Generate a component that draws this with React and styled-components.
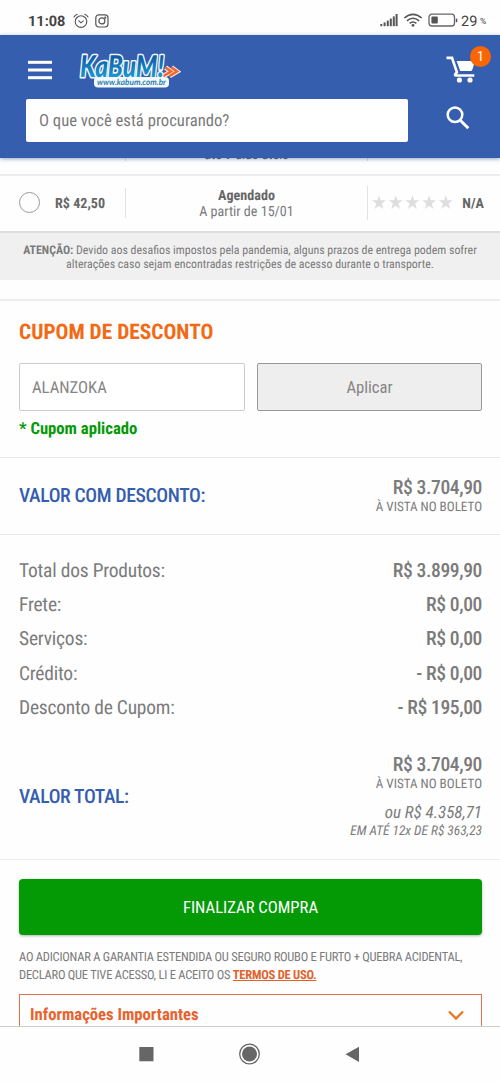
import styled, { createGlobalStyle, css } from "styled-components";

const colors = {
  blue: "#355eae",
  orange: "#f26a14",
  green: "#049a06",
  text: "#7b7b7b",
  dark: "#666",
  line: "#ededed",
};

const totals = [
  { label: "Total dos Produtos:", value: "R$ 3.899,90" },
  { label: "Frete:", value: "R$ 0,00" },
  { label: "Serviços:", value: "R$ 0,00" },
  { label: "Crédito:", value: "- R$ 0,00" },
  { label: "Desconto de Cupom:", value: "- R$ 195,00" },
];

export default function App() {
  return (
    <Screen>
      <GlobalStyle />
      <StatusBar />
      <Header />
      <Content>
        <Shipping />
        <Notice>
          <p>
            <b>ATENÇÃO:</b> Devido aos desafios impostos pela pandemia, alguns prazos de entrega podem sofrer
          </p>
          <p>alterações caso sejam encontradas restrições de acesso durante o transporte.</p>
        </Notice>
        <Coupon />
        <DiscountRow>
          <BlueLabel>VALOR COM DESCONTO:</BlueLabel>
          <Amount>
            <Price>R$ 3.704,90</Price>
            <Caption>À VISTA NO BOLETO</Caption>
          </Amount>
        </DiscountRow>
        <TotalsList>
          {totals.map((t) => (
            <TotalsRow key={t.label}>
              <TotalsLabel>{t.label}</TotalsLabel>
              <Price>{t.value}</Price>
            </TotalsRow>
          ))}
        </TotalsList>
        <GrandTotal>
          <BlueLabel>VALOR TOTAL:</BlueLabel>
          <Amount>
            <Price>R$ 3.704,90</Price>
            <Caption>À VISTA NO BOLETO</Caption>
            <Installments>ou R$ 4.358,71</Installments>
            <InstallmentsNote>EM ATÉ 12x DE R$ 363,23</InstallmentsNote>
          </Amount>
        </GrandTotal>
        <Checkout />
      </Content>
      <NavBar>
        <svg width="240" height="24" viewBox="0 0 240 24" fill="#666">
          <rect x="9.3" y="5" width="14.2" height="14.2" rx="0.5" />
          <circle cx="119.5" cy="12" r="9.8" fill="none" stroke="#666" strokeWidth="1.3" />
          <circle cx="119.5" cy="12" r="7.5" />
          <path d="M215.500 12.300 L229 4.800 V20 Z" />
        </svg>
      </NavBar>
    </Screen>
  );
}

function StatusBar() {
  return (
    <Status>
      <Clock>11:08</Clock>
      <svg width="16" height="16" viewBox="0 0 16 16" fill="none" stroke="#555" strokeWidth="1.1" strokeLinecap="round">
        <circle cx="8" cy="8.600" r="5.800" />
        <path d="M5.800 7.800 L8 9.800 L10.300 7.800" />
        <path d="M1 4 Q2 2 4.200 1.300 M15 4 Q14 2 11.800 1.300" />
      </svg>
      <svg width="14" height="14" viewBox="0 0 14 14" fill="none" stroke="#555" strokeWidth="1.200">
        <rect x="0.8" y="0.8" width="12.200" height="12.200" rx="3" />
        <circle cx="6.900" cy="6.900" r="3" />
        <circle cx="10.300" cy="3.600" r="0.500" />
      </svg>
      <StatusRight width="88" height="16" viewBox="0 0 88 16">
        <g fill="#555">
          <rect x="0.300" y="11" width="2" height="2.200" />
          <rect x="3.600" y="9.400" width="2" height="3.800" />
          <rect x="6.800" y="7.600" width="2" height="5.600" />
          <rect x="9.800" y="5.600" width="2" height="7.600" />
          <rect x="12.800" y="3.400" width="2" height="9.800" />
          <rect x="15.600" y="1" width="2" height="12.200" />
        </g>
        <g fill="none" stroke="#555" strokeWidth="1.600">
          <path d="M24.300 5 Q33 -2.400 41.700 5" />
          <path d="M26.900 7.900 Q33 2.600 39.100 7.900" />
          <path d="M29.600 10.300 Q33 7.600 36.400 10.300" />
        </g>
        <circle cx="33" cy="12.300" r="1.400" fill="#555" />
        <rect x="49" y="1.200" width="25.500" height="11.800" rx="3" fill="none" stroke="#666" strokeWidth="1.300" />
        <rect x="51.400" y="3.600" width="6.400" height="7" rx="1" fill="#555" />
        <rect x="75.800" y="5.600" width="1.500" height="3.600" fill="#555" />
      </StatusRight>
      <Battery>29</Battery>
      <Percent>%</Percent>
    </Status>
  );
}

function Header() {
  return (
    <HeaderBox>
      <HeaderTop>
        <svg width="24" height="20" viewBox="0 0 24 20" fill="#fff">
          <rect y="0.800" width="24" height="3" />
          <rect y="8.500" width="24" height="3" />
          <rect y="16.200" width="24" height="3" />
        </svg>
        <Logo />
        <CartWrap>
          <svg width="30" height="28" viewBox="0 0 30 28" fill="#fff">
            <path d="M0.500 0.600 H7 L8.100 4 L12.400 16.400 L11 18.200 H28.300 V20.700 H9.800 C7.800 20.700 7.200 18.900 8.200 17.500 L9.400 15.700 L5.100 3.200 H0.500 Z" />
            <path d="M10.600 5 H29 L26.400 13.600 Q26 15.100 24.400 15.100 H14.200 Z" />
            <circle cx="13.400" cy="24" r="2.600" />
            <circle cx="24" cy="24" r="2.600" />
          </svg>
          <Badge>1</Badge>
        </CartWrap>
      </HeaderTop>
      <SearchRow>
        <SearchField>O que você está procurando?</SearchField>
        <svg width="24" height="24" viewBox="0 0 24 24" fill="none" stroke="#fff" strokeWidth="2.500">
          <circle cx="9" cy="8.800" r="7.300" />
          <path d="M14 14 L22.300 22.300" strokeWidth="3" />
        </svg>
      </SearchRow>
    </HeaderBox>
  );
}

function Logo() {
  return (
    <svg width="104" height="40" viewBox="0 0 104 40">
      <defs>
        <linearGradient id="kabum" x1="0" y1="0" x2="0" y2="1">
          <stop offset="0.200" stopColor="#0b5aa6" />
          <stop offset="0.800" stopColor="#1c98cf" />
        </linearGradient>
      </defs>
      <rect x="17" y="27" width="75" height="10.500" rx="4" fill="#f4fafc" />
      <g fill="none" strokeLinejoin="miter">
        <path d="M88.500 17.500 L94 21.500 L86.500 26 M94.500 17.500 L100 21.500 L92.500 26" stroke="#f6e4dc" strokeWidth="4.800" />
        <path d="M88.500 17.500 L94 21.500 L86.500 26 M94.500 17.500 L100 21.500 L92.500 26" stroke="#f4652c" strokeWidth="2.600" />
      </g>
      <LogoText>
        <text x="3" y="27" fontSize="30" textLength="84" lengthAdjust="spacingAndGlyphs" fill="url(#kabum)" stroke="#f4fafc" strokeWidth="3.200" strokeLinejoin="round" paintOrder="stroke">
          KaBuM!
        </text>
        <text x="20" y="35" fontSize="8.500" fontWeight="700" textLength="69" lengthAdjust="spacingAndGlyphs" fill="#2b7fae">
          www.kabum.com.br
        </text>
      </LogoText>
    </svg>
  );
}

function Shipping() {
  return (
    <>
      <ClippedRow>
        <Divider />
        <span>até 9 dias úteis</span>
        <Divider />
      </ClippedRow>
      <ShippingRow>
        <Radio />
        <ShippingPrice>R$ 42,50</ShippingPrice>
        <Schedule>
          <b>Agendado</b>
          <span>A partir de 15/01</span>
        </Schedule>
        <Stars width="82" height="16" viewBox="0 0 82 16" fill="#dedede">
          {[0, 1, 2, 3, 4].map((i) => (
            <path key={i} transform={`translate(${i * 16.700} 0)`} d="M7 0.300 L8.700 5.200 L14 5.300 L9.700 8.600 L11.400 14 L7 10.800 L2.600 14 L4.300 8.600 L0 5.300 L5.300 5.200 Z" />
          ))}
        </Stars>
        <Rating>N/A</Rating>
      </ShippingRow>
    </>
  );
}

function Coupon() {
  return (
    <CouponSection>
      <CouponTitle>CUPOM DE DESCONTO</CouponTitle>
      <CouponForm>
        <CouponField>ALANZOKA</CouponField>
        <ApplyButton>Aplicar</ApplyButton>
      </CouponForm>
      <Applied>* Cupom aplicado</Applied>
    </CouponSection>
  );
}

function Checkout() {
  return (
    <CheckoutSection>
      <BuyButton>FINALIZAR COMPRA</BuyButton>
      <Terms>
        <p>AO ADICIONAR A GARANTIA ESTENDIDA OU SEGURO ROUBO E FURTO + QUEBRA ACIDENTAL,</p>
        <p>
          DECLARO QUE TIVE ACESSO, LI E ACEITO OS <a>TERMOS DE USO.</a>
        </p>
      </Terms>
      <InfoBox>
        <span>Informações Importantes</span>
        <svg width="16" height="11" viewBox="0 0 16 11" fill="none" stroke="#e57a22" strokeWidth="2.400">
          <path d="M1 1.500 L8 8.500 L15 1.500" />
        </svg>
      </InfoBox>
    </CheckoutSection>
  );
}

const GlobalStyle = createGlobalStyle`
  * {
    box-sizing: border-box;
  }
  body, p, h2 {
    margin: 0;
  }
  button {
    font: inherit;
  }
  svg {
    display: block;
    flex: none;
  }
`;

const Screen = styled.div`
  display: flex;
  flex-direction: column;
  width: 500px;
  height: 1082px;
  overflow: hidden;
  background: #fefefe;
  color: ${colors.text};
  font-family: "Roboto Condensed", "Roboto", sans-serif;
  font-stretch: condensed;
  text-rendering: geometricPrecision;
  white-space: nowrap;
`;

const Status = styled.div`
  display: flex;
  align-items: center;
  flex: none;
  height: 35px;
  padding: 6px 13px 0 28px;
  font-family: "Roboto", sans-serif;
  font-stretch: normal;
  color: #444;
`;

const Clock = styled.span`
  width: 45px;
  padding-top: 1px;
  font-size: 14.5px;
  font-weight: 700;
  & + svg {
    margin-right: 6px;
  }
`;

const StatusRight = styled.svg`
  margin-left: auto;
`;

const Battery = styled.span`
  width: 19px;
  margin-left: -7px;
  padding-top: 1px;
  font-size: 14.5px;
`;

const Percent = styled.span`
  width: 7px;
  padding-top: 3px;
  font-size: 8.5px;
`;

const HeaderBox = styled.header`
  flex: none;
  height: 123px;
  background: ${colors.blue};
  box-shadow: 0 1px 4px rgba(30, 60, 110, 0.45);
  z-index: 1;
`;

const HeaderTop = styled.div`
  display: flex;
  align-items: center;
  gap: 25px;
  height: 64px;
  padding: 5px 9px 0 28px;
`;

const LogoText = styled.g`
  font-family: "Lato", sans-serif;
  font-stretch: normal;
  font-style: italic;
  font-weight: 900;
`;

const CartWrap = styled.div`
  position: relative;
  width: 45px;
  margin-left: auto;
`;

const Badge = styled.span`
  position: absolute;
  top: -10px;
  right: 0;
  width: 21px;
  height: 21px;
  border-radius: 50%;
  background: #fb6502;
  color: #fff;
  font-size: 14px;
  line-height: 22px;
  text-align: center;
`;

const SearchRow = styled.div`
  display: flex;
  align-items: center;
  gap: 38px;
  padding-left: 26px;
  & > svg {
    margin-bottom: 5px;
  }
`;

const SearchField = styled.div`
  width: 382px;
  height: 43px;
  padding-left: 13px;
  border-radius: 2px;
  background: #fff;
  font-size: 16.67px;
  line-height: 45px;
`;

const Content = styled.main`
  flex: 1;
  min-height: 0;
  overflow: hidden;
`;

const ClippedRow = styled.div`
  display: flex;
  justify-content: space-between;
  align-items: flex-end;
  height: 18px;
  padding: 0 132px 11px 125px;
  border-bottom: 2px solid ${colors.line};
  font-size: 14px;
  line-height: 16px;
  color: ${colors.dark};
`;

const Divider = styled.i`
  width: 1px;
  height: 6px;
  margin-bottom: 2px;
  background: #ddd;
`;

const ShippingRow = styled.div`
  display: flex;
  align-items: center;
  height: 57px;
  padding: 0 16px 2px 19px;
  border-bottom: 2px solid #dedede;
`;

const Radio = styled.span`
  width: 21px;
  height: 21px;
  border: 1px solid #999;
  border-radius: 50%;
`;

const ShippingPrice = styled.b`
  width: 71px;
  height: 30px;
  margin-left: 15px;
  font-size: 14.1px;
  line-height: 33px;
  color: ${colors.dark};
  border-right: 1px solid #e2e2e2;
`;

const Schedule = styled.div`
  display: flex;
  flex-direction: column;
  align-items: center;
  width: 242px;
  padding-top: 2px;
  border-right: 1px solid #e2e2e2;
  font-size: 14.1px;
  line-height: 16px;
  b {
    color: ${colors.dark};
  }
`;

const Stars = styled.svg`
  margin-left: 4px;
`;

const Rating = styled.b`
  margin-left: auto;
  padding-top: 2px;
  font-size: 14.1px;
  color: ${colors.dark};
`;

const Notice = styled.div`
  height: 47px;
  padding-top: 10px;
  background: #f0f0f0;
  font-size: 11.9px;
  line-height: 14px;
  text-align: center;
`;

const CouponSection = styled.section`
  height: 158px;
  margin-top: 19px;
  padding: 20px 18px 0 19px;
  border-top: 2px solid ${colors.line};
`;

const CouponTitle = styled.h2`
  font-size: 21.4px;
  line-height: 24px;
  color: ${colors.orange};
`;

const CouponForm = styled.div`
  display: grid;
  grid-template-columns: 226px 225px;
  gap: 12px;
  margin-top: 18px;
`;

const field = css`
  height: 48px;
  border-radius: 2px;
  font-size: 16.67px;
  line-height: 49px;
  color: #858585;
`;

const CouponField = styled.div`
  ${field}
  padding-left: 12px;
  border: 1px solid #ccc;
  background: #fff;
`;

const ApplyButton = styled.button`
  ${field}
  padding: 2px 0 0;
  border: 1px solid #999;
  background: #eee;
  line-height: 44px;
`;

const Applied = styled.b`
  display: block;
  margin-top: 9px;
  font-size: 16.67px;
  line-height: 20px;
  color: ${colors.green};
`;

const DiscountRow = styled.section`
  display: flex;
  align-items: center;
  justify-content: space-between;
  height: 77px;
  padding: 0 18px 0 19px;
  border-top: 1px solid #e8e8e8;
`;

const BlueLabel = styled.span`
  padding-bottom: 2px;
  font-size: 19.6px;
  font-weight: 500;
  letter-spacing: -0.35px;
  color: ${colors.blue};
`;

const Amount = styled.div`
  display: flex;
  flex-direction: column;
  align-items: flex-end;
`;

const Price = styled.span`
  font-size: 19.6px;
  font-weight: 500;
  letter-spacing: -0.4px;
  line-height: 22px;
`;

const Caption = styled.span`
  font-size: 13.1px;
  line-height: 17px;
`;

const Installments = styled.i`
  margin-top: 10px;
  font-size: 17px;
  line-height: 20px;
`;

const InstallmentsNote = styled.i`
  font-size: 13.4px;
  line-height: 17px;
`;

const TotalsList = styled.section`
  height: 201px;
  padding: 19px 18px 0 19px;
  border-top: 1px solid #e8e8e8;
  font-size: 19.44px;
`;

const TotalsRow = styled.div`
  display: flex;
  align-items: center;
  justify-content: space-between;
  height: 34.2px;
`;

const TotalsLabel = styled.span`
  padding-bottom: 1px;
  letter-spacing: -0.2px;
`;

const GrandTotal = styled.section`
  display: flex;
  align-items: center;
  justify-content: space-between;
  height: 124px;
  padding: 0 18px 0 19px;
`;

const CheckoutSection = styled.section`
  padding: 19px 18px 0 19px;
  border-top: 1px solid ${colors.line};
`;

const BuyButton = styled.button`
  width: 463px;
  height: 56px;
  padding: 0;
  border: 0;
  border-radius: 4px;
  background: ${colors.green};
  box-shadow: 0 1px 3px rgba(0, 0, 0, 0.3);
  color: #fff;
  font-size: 16.67px;
`;

const Terms = styled.div`
  margin-top: 14px;
  font-size: 12.5px;
  letter-spacing: -0.24px;
  line-height: 17.5px;
  a {
    color: #e2622e;
    font-weight: 700;
    text-decoration: underline;
  }
`;

const InfoBox = styled.div`
  display: flex;
  align-items: center;
  justify-content: space-between;
  height: 41px;
  margin-top: 10px;
  padding: 1px 17px 0 10px;
  border: 1px solid #e2704a;
  color: #e8622e;
  font-size: 16.67px;
  font-weight: 700;
`;

const NavBar = styled.nav`
  display: flex;
  justify-content: center;
  flex: none;
  height: 56px;
  padding: 15px 1px 0 0;
  border-top: 1px solid #ccc;
  background: #fefefe;
`;
